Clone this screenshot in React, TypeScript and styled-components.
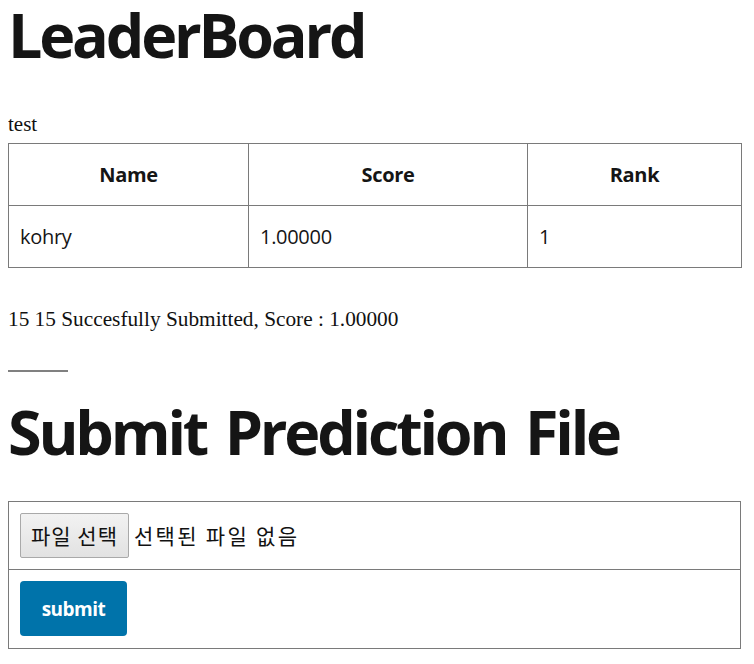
import React from "react";
import styled, { createGlobalStyle } from "styled-components";

const Global = createGlobalStyle`
  body {
    margin: 8px;
    background: #ffffff;
    color: #111111;
    font-family: "Liberation Serif", serif;
  }
`;

const Page = styled.div`
  display: flex;
  flex-direction: column;
  width: 733px;
`;

const Heading = styled.h1<{ $top: number; $bottom: number }>`
  font-family: "Open Sans", "Noto Sans", sans-serif;
  font-weight: 700;
  font-size: 61px;
  line-height: 1.4;
  letter-spacing: -3.2px;
  word-spacing: 6px;
  color: #151515;
  margin: ${(p) => `${p.$top}px 0 ${p.$bottom}px`};
`;

const Caption = styled.p`
  font-family: "Liberation Serif", serif;
  font-size: 21px;
  line-height: 24px;
  margin: 35px 0 7px;
`;

const Table = styled.table`
  width: 100%;
  table-layout: fixed;
  border-collapse: collapse;
  font-family: "Open Sans", "Noto Sans", sans-serif;
  font-size: 20px;
  color: #151515;
`;

const Th = styled.th<{ $w: string }>`
  box-sizing: border-box;
  border: 1px solid #7a7a7a;
  height: 62px;
  padding: 0 12px;
  font-weight: 700;
  text-align: center;
  width: ${(p) => p.$w};
  letter-spacing: -0.3px;
`;

const Td = styled.td`
  border: 1px solid #7a7a7a;
  height: 61px;
  padding: 0 11px;
  text-align: left;
  font-weight: 400;
  letter-spacing: -0.3px;
`;

const Message = styled.p`
  font-family: "Liberation Serif", serif;
  font-size: 21.3px;
  line-height: 24px;
  margin: 39px 0 0;
`;

const Rule = styled.hr`
  width: 60px;
  margin: 39px 0 0;
  border: none;
  border-top: 2px solid #808080;
`;

const FormTable = styled.div`
  display: flex;
  flex-direction: column;
  border: 1px solid #7a7a7a;
`;

const FormRow = styled.div<{ $h: number }>`
  display: flex;
  align-items: center;
  padding: 0 11px;
  height: ${(p) => p.$h}px;
  box-sizing: border-box;
  & + & {
    border-top: 1px solid #7a7a7a;
  }
`;

const FileButton = styled.span`
  display: inline-flex;
  align-items: center;
  justify-content: center;
  box-sizing: border-box;
  width: 109px;
  height: 45px;
  border: 1px solid #a9a9a9;
  border-radius: 2px;
  background: linear-gradient(#f2f2f2, #e2e2e2);
  font-family: "Noto Sans CJK KR", sans-serif;
  font-size: 21px;
  letter-spacing: 1px;
  color: #111;
`;

const FileLabel = styled.span`
  font-family: "Noto Sans CJK KR", sans-serif;
  font-size: 21px;
  letter-spacing: 2.3px;
  margin-left: 5px;
  color: #111;
`;

const SubmitButton = styled.button`
  width: 107px;
  height: 55px;
  border: none;
  border-radius: 4px;
  background: #0073aa;
  color: #ffffff;
  font-family: "Open Sans", "Noto Sans", sans-serif;
  font-weight: 700;
  font-size: 19px;
  letter-spacing: -0.5px;
  padding: 0;
`;

export default function App() {
  return (
    <>
      <Global />
      <Page>
        <Heading $top={-16} $bottom={0}>LeaderBoard</Heading>
        <Caption>test</Caption>
        <Table>
          <thead>
            <tr>
              <Th $w="240px">Name</Th>
              <Th $w="279px">Score</Th>
              <Th $w="214px">Rank</Th>
            </tr>
          </thead>
          <tbody>
            <tr>
              <Td>kohry</Td>
              <Td>1.00000</Td>
              <Td>1</Td>
            </tr>
          </tbody>
        </Table>
        <Message>15 15 Succesfully Submitted, Score : 1.00000</Message>
        <Rule />
        <Heading $top={17} $bottom={26}>Submit Prediction File</Heading>
        <FormTable>
          <FormRow $h={67}>
            <FileButton>파일 선택</FileButton>
            <FileLabel>선택된 파일 없음</FileLabel>
          </FormRow>
          <FormRow $h={79}>
            <SubmitButton type="button">submit</SubmitButton>
          </FormRow>
        </FormTable>
      </Page>
    </>
  );
}
